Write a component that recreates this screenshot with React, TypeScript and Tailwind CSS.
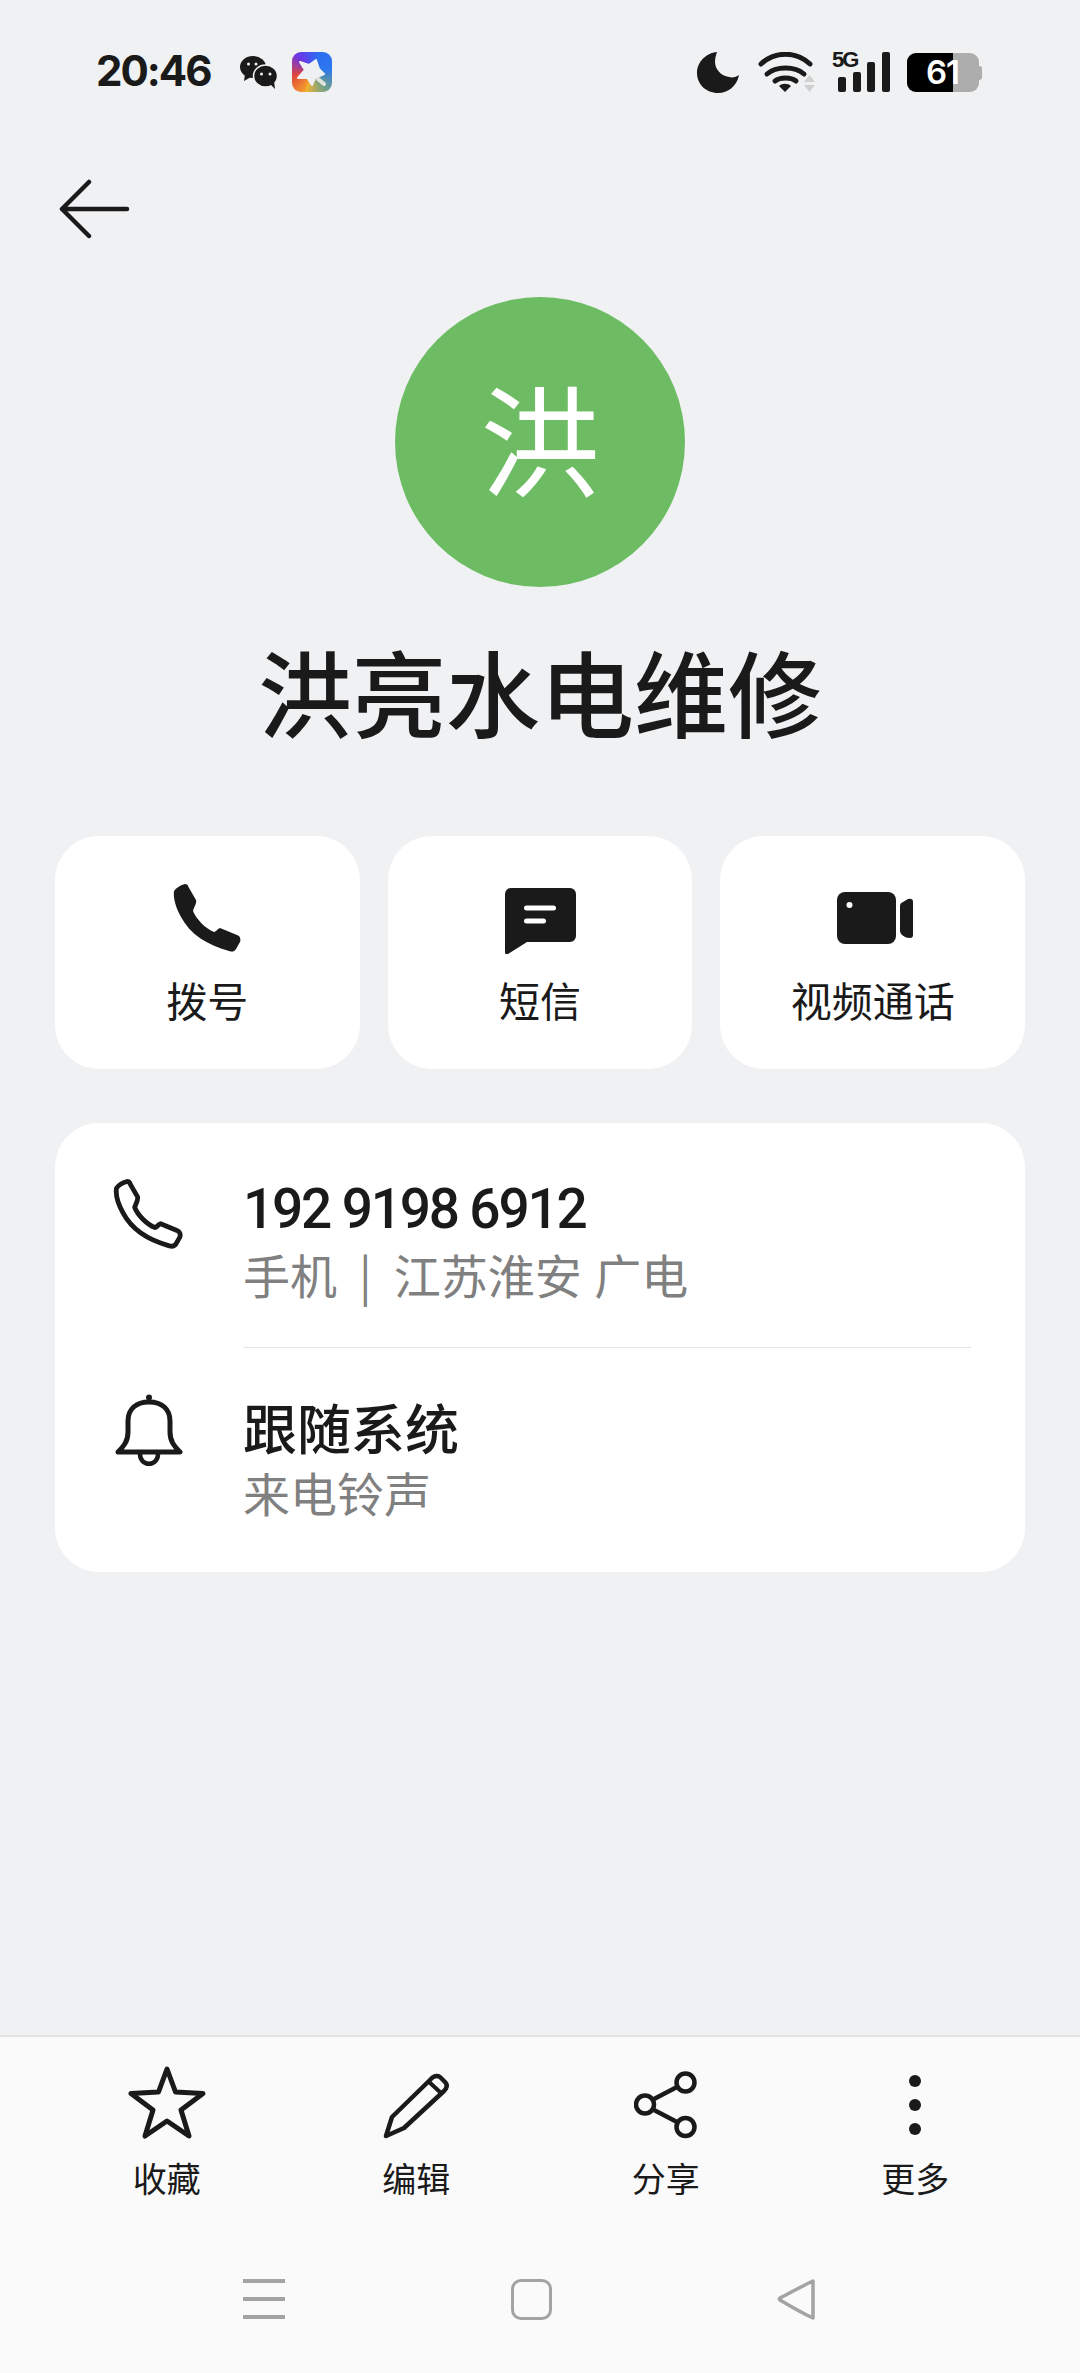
import React from "react";

const CJK = "font-['Noto_Sans_CJK_SC','Noto_Sans',sans-serif]";
const PHONE =
  "M1 7C3 4 8 1 12 0C14 0 15 1 15.500 3L23 16C24 19 21 23 20 27C23 35 33 45 41 48C43 48 44 45 47 44L64 51C67 52 68 55 67 58L63 65C61 68 59 68 56 67C34 61 17 50 8 33C3 24 0 14 1 7Z";

function Moon() {
  return (
    <svg width="42" height="41" viewBox="0 0 42 41" className="block">
      <path d="M20 0C9 1 0 10 0 21c0 11 9 20 21 20 10 0 19-7 21-18-3 2-6 3-10 2-8-1-14-8-14-15 0-4 1-7 2-10z" fill="#1a1a1a" />
    </svg>
  );
}

function Wifi() {
  return (
    <svg width="58" height="41" viewBox="0 0 58 41" className="block">
      <path d="M3 12C17 -1 38 -1 52 12" fill="none" stroke="#1a1a1a" strokeWidth="5" strokeLinecap="round" />
      <path d="M9 22C18 14 37 14 46 22" fill="none" stroke="#1a1a1a" strokeWidth="5" strokeLinecap="round" />
      <path d="M17 29C22 25 33 25 38 29" fill="none" stroke="#1a1a1a" strokeWidth="5" strokeLinecap="round" />
      <path d="M21 34c3-3 9-3 12 0l-6 6z" fill="#1a1a1a" />
      <path d="M46 30l5.500-7 5.500 7zM46 33h11l-5.500 7z" fill="#cfcfcf" />
    </svg>
  );
}

function Signal() {
  return (
    <div className="relative w-[57px] h-[40px]">
      <span className="absolute left-0 top-[-3px] text-[22px] leading-[22px] font-bold text-[#1a1a1a] font-['Liberation_Sans',sans-serif] tracking-[-2px]">5G</span>
      <div className="absolute bottom-0 left-[6px] flex items-end gap-[6.5px]">
        <div className="w-[8px] h-[15px] rounded-[2px] bg-[#1a1a1a]" />
        <div className="w-[8px] h-[20px] rounded-[2px] bg-[#1a1a1a]" />
        <div className="w-[8px] h-[30px] rounded-[2px] bg-[#1a1a1a]" />
        <div className="w-[8px] h-[40px] rounded-[2px] bg-[#1a1a1a]" />
      </div>
    </div>
  );
}

function Battery() {
  return (
    <div className="flex items-center">
      <div className="relative w-[72px] h-[39px] rounded-[9px] bg-[#adadad] overflow-hidden">
        <div className="absolute inset-y-0 left-0 w-[46px] bg-black" />
        <span className="absolute left-[19px] top-0 text-white text-[33px] leading-[39px] font-semibold font-['Inter',sans-serif] tracking-[-1px]">61</span>
      </div>
      <div className="w-[3px] h-[14px] rounded-r-[3px] bg-[#adadad]" />
    </div>
  );
}

function Wechat() {
  return (
    <svg width="38" height="33" viewBox="0 0 38 33" className="block">
      <ellipse cx="13" cy="11" rx="13" ry="11" fill="#1a1a1a" />
      <path d="M5 18l-1 7 7-4z" fill="#1a1a1a" />
      <ellipse cx="25.500" cy="20" rx="12" ry="11" fill="#1a1a1a" stroke="#f0f1f3" strokeWidth="1.500" />
      <path d="M30 28l5 5-1-8z" fill="#1a1a1a" />
      <circle cx="8.500" cy="8" r="1.500" fill="#f0f1f3" />
      <circle cx="16" cy="8" r="1.500" fill="#f0f1f3" />
      <circle cx="21.500" cy="18" r="1.500" fill="#f0f1f3" />
      <circle cx="30" cy="18" r="1.500" fill="#f0f1f3" />
    </svg>
  );
}

function AppIcon() {
  return (
    <div className="w-[40px] h-[40px] rounded-[9px] overflow-hidden bg-[conic-gradient(from_200deg_at_50%_50%,#f59e2c,#e0453c,#6a35e8,#2b6df2,#2b78ee,#6fa08a,#f3b52e)]">
      <svg width="40" height="40" viewBox="0 0 40 40" className="block">
        <path d="M24 8L27 17L32 22L23 26L20 33L15.500 26L6 26L13 18L8 10L17 13Z" fill="#eef0f3" stroke="#eef0f3" strokeWidth="2" strokeLinejoin="round" />
        <path d="M26 27l6 5" stroke="#dfe5dc" strokeWidth="4" strokeLinecap="round" />
      </svg>
    </div>
  );
}

function StatusBar() {
  return (
    <div className="h-[144px] pl-[96px] pr-[98px] pt-[52px] flex items-start">
      <span className="w-[114px] text-[42px] leading-[38px] font-bold text-[#1a1a1a] font-['Inter',sans-serif] tracking-[-2px] whitespace-nowrap">20:46</span>
      <div className="ml-[30px] mt-[4px]"><Wechat /></div>
      <div className="ml-[14px]"><AppIcon /></div>
      <div className="ml-auto flex items-start">
        <Moon />
        <div className="ml-[19px]"><Wifi /></div>
        <div className="ml-[16px]"><Signal /></div>
        <div className="ml-[18px] mt-[1px]"><Battery /></div>
      </div>
    </div>
  );
}

function Action({ label, icon }: { label: string; icon: React.ReactNode }) {
  return (
    <div className="flex-1 h-[233px] rounded-[44px] bg-white flex flex-col items-center pt-[47px]">
      <div className="h-[70px] flex items-center justify-center">{icon}</div>
      <span className={`mt-[26px] text-[41px] leading-[40px] text-[#1a1a1a] ${CJK}`}>{label}</span>
    </div>
  );
}

function BottomItem({ label, icon }: { label: string; icon: React.ReactNode }) {
  return (
    <div className="w-[249.5px] flex flex-col items-center">
      <div className="h-[80px] w-full flex items-center justify-center">{icon}</div>
      <span className={`mt-[13px] text-[34px] leading-[40px] text-[#1a1a1a] ${CJK}`}>{label}</span>
    </div>
  );
}

export default function App() {
  return (
    <div className={`w-[1080px] h-[2373px] bg-[#f0f1f3] flex flex-col overflow-hidden ${CJK}`}>
      <StatusBar />

      <div className="h-[153px] pl-[58px] pt-[35px]">
        <svg width="72" height="60" viewBox="0 0 72 60" className="block">
          <path d="M31 3L4 30l27 27M4 30h65" fill="none" stroke="#1a1a1a" strokeWidth="4.500" strokeLinecap="round" strokeLinejoin="round" />
        </svg>
      </div>

      <div className="flex flex-col items-center">
        <div className="w-[290px] h-[290px] rounded-full bg-[#6dbc64] flex items-center justify-center">
          <span className="pb-[13px] text-white text-[120px] leading-[120px]">洪</span>
        </div>
        <h1 className="mt-[38px] text-[94px] leading-[130px] font-medium text-[#1a1a1a]">洪亮水电维修</h1>
      </div>

      <div className="mt-[81px] px-[55px] flex gap-[28px]">
        <Action
          label="拨号"
          icon={
            <svg width="68" height="68" viewBox="0 0 68 68" className="block">
              <path d={PHONE} fill="#1a1a1a" />
            </svg>
          }
        />
        <Action
          label="短信"
          icon={
            <svg width="71" height="66" viewBox="0 0 71 66" className="block mt-[6px]">
              <path d="M6 0h59a6 6 0 0 1 6 6v42a6 6 0 0 1-6 6H22L3 66c-2 1-3 0-3-2V6a6 6 0 0 1 6-6z" fill="#1a1a1a" />
              <rect x="19" y="17.500" width="32" height="5" rx="2.500" fill="#fff" />
              <rect x="19" y="30.500" width="22" height="5" rx="2.500" fill="#fff" />
            </svg>
          }
        />
        <Action
          label="视频通话"
          icon={
            <svg width="76" height="52" viewBox="0 0 76 52" className="block ml-[5px]">
              <rect x="0" y="0" width="59" height="52" rx="8" fill="#1a1a1a" />
              <path d="M63 14q0-3 3-4l5-3q5-1 5 3v33q0 3-3 3-3 0-5-1l-3-2q-2-2-2-4z" fill="#1a1a1a" />
              <circle cx="12.500" cy="13" r="3" fill="#fff" />
            </svg>
          }
        />
      </div>

      <div className="mt-[54px] mx-[55px] rounded-[44px] bg-white h-[449px] flex flex-col">
        <div className="h-[224px] pt-[54px] flex items-start">
          <div className="w-[188px] pl-[58px] pt-[2px]">
            <svg width="70" height="71" viewBox="0 0 70 71" className="block">
              <g transform="translate(2.500 2.500) scale(0.96)">
                <path d={PHONE} fill="none" stroke="#1a1a1a" strokeWidth="5" strokeLinejoin="round" />
              </g>
            </svg>
          </div>
          <div>
            <div className="text-[55px] leading-[64px] text-[#1a1a1a] font-medium tracking-[-2.2px] font-['Roboto','Noto_Sans',sans-serif]">192 9198 6912</div>
            <div className="mt-[4px] text-[47px] leading-[58px] text-[#808080] whitespace-nowrap">
              手机<span className="mx-[22px]">|</span>江苏淮安 <span className="ml-[2px]">广电</span>
            </div>
          </div>
        </div>
        <div className="h-px ml-[188px] mr-[54px] bg-[#e6e6e6]" />
        <div className="flex-1 pt-[46px] flex items-start">
          <div className="w-[188px] pl-[60px]">
            <svg width="68" height="72" viewBox="0 0 68 72" className="block">
              <path d="M3 58C9 52 13 47 13 38V27C13 15 21 8 34 8C47 8 55 15 55 27V38C55 47 59 52 65 58Z" fill="none" stroke="#1a1a1a" strokeWidth="5" strokeLinejoin="round" />
              <path d="M25 60C25 73 43 73 43 60" fill="none" stroke="#1a1a1a" strokeWidth="4.500" />
              <circle cx="34" cy="3.500" r="3" fill="#1a1a1a" />
            </svg>
          </div>
          <div className="pt-[1px]">
            <div className="text-[54px] leading-[64px] text-[#1a1a1a] font-medium">跟随系统</div>
            <div className="mt-[4px] text-[47px] leading-[58px] text-[#808080]">来电铃声</div>
          </div>
        </div>
      </div>

      <div className="mt-auto h-[338px] bg-[#fafafa] border-t-2 border-[#e4e4e4]">
        <div className="pt-[28px] pl-[42px] flex">
          <BottomItem
            label="收藏"
            icon={
              <svg width="78" height="74" viewBox="0 0 78 74" className="block mb-[6px]">
                <path d="M39 4L47.500 27L75 28.500L53 45L61 71L39 56L17 71L25 45L3 28.500L30.500 27Z" fill="none" stroke="#1a1a1a" strokeWidth="5" strokeLinejoin="round" />
              </svg>
            }
          />
          <BottomItem
            label="编辑"
            icon={
              <svg width="68" height="68" viewBox="0 0 68 68" className="block ml-[2px]">
                <path d="M3 65L9 46L47 9C50 5 54 4 57 6L62 11C65 14 64 17 61 20L21 57Z" fill="none" stroke="#1a1a1a" strokeWidth="4.500" strokeLinejoin="round" />
                <path d="M45 10L58 22" fill="none" stroke="#1a1a1a" strokeWidth="4" />
              </svg>
            }
          />
          <BottomItem
            label="分享"
            icon={
              <svg width="64" height="68" viewBox="0 0 64 68" className="block">
                <circle cx="11" cy="33.500" r="9" fill="none" stroke="#1a1a1a" strokeWidth="4.500" />
                <circle cx="51.500" cy="11.500" r="9" fill="none" stroke="#1a1a1a" strokeWidth="4.500" />
                <circle cx="51.500" cy="56" r="9" fill="none" stroke="#1a1a1a" strokeWidth="4.500" />
                <path d="M20 28l23-12M20 39l23 12" fill="none" stroke="#1a1a1a" strokeWidth="4.500" />
              </svg>
            }
          />
          <BottomItem
            label="更多"
            icon={
              <div className="flex flex-col gap-[12px]">
                <div className="w-[12px] h-[12px] rounded-full bg-[#1a1a1a]" />
                <div className="w-[12px] h-[12px] rounded-full bg-[#1a1a1a]" />
                <div className="w-[12px] h-[12px] rounded-full bg-[#1a1a1a]" />
              </div>
            }
          />
        </div>
        <div className="mt-[80px] pl-[243px] flex items-center">
          <div className="w-[42px] h-[40px] flex flex-col justify-between">
            <div className="h-[4px] bg-[#a3a3a3]" />
            <div className="h-[4px] bg-[#a3a3a3]" />
            <div className="h-[4px] bg-[#a3a3a3]" />
          </div>
          <div className="ml-[226px] w-[41px] h-[41px] rounded-[10px] border-[3px] border-[#a3a3a3]" />
          <svg width="42" height="42" viewBox="0 0 42 42" className="block ml-[224px]">
            <path d="M37 3C26 8 14 15 4 20c-1 1-1 1 0 2 10 6 22 13 33 18z" fill="none" stroke="#a3a3a3" strokeWidth="3.500" strokeLinejoin="round" />
          </svg>
        </div>
      </div>
    </div>
  );
}
